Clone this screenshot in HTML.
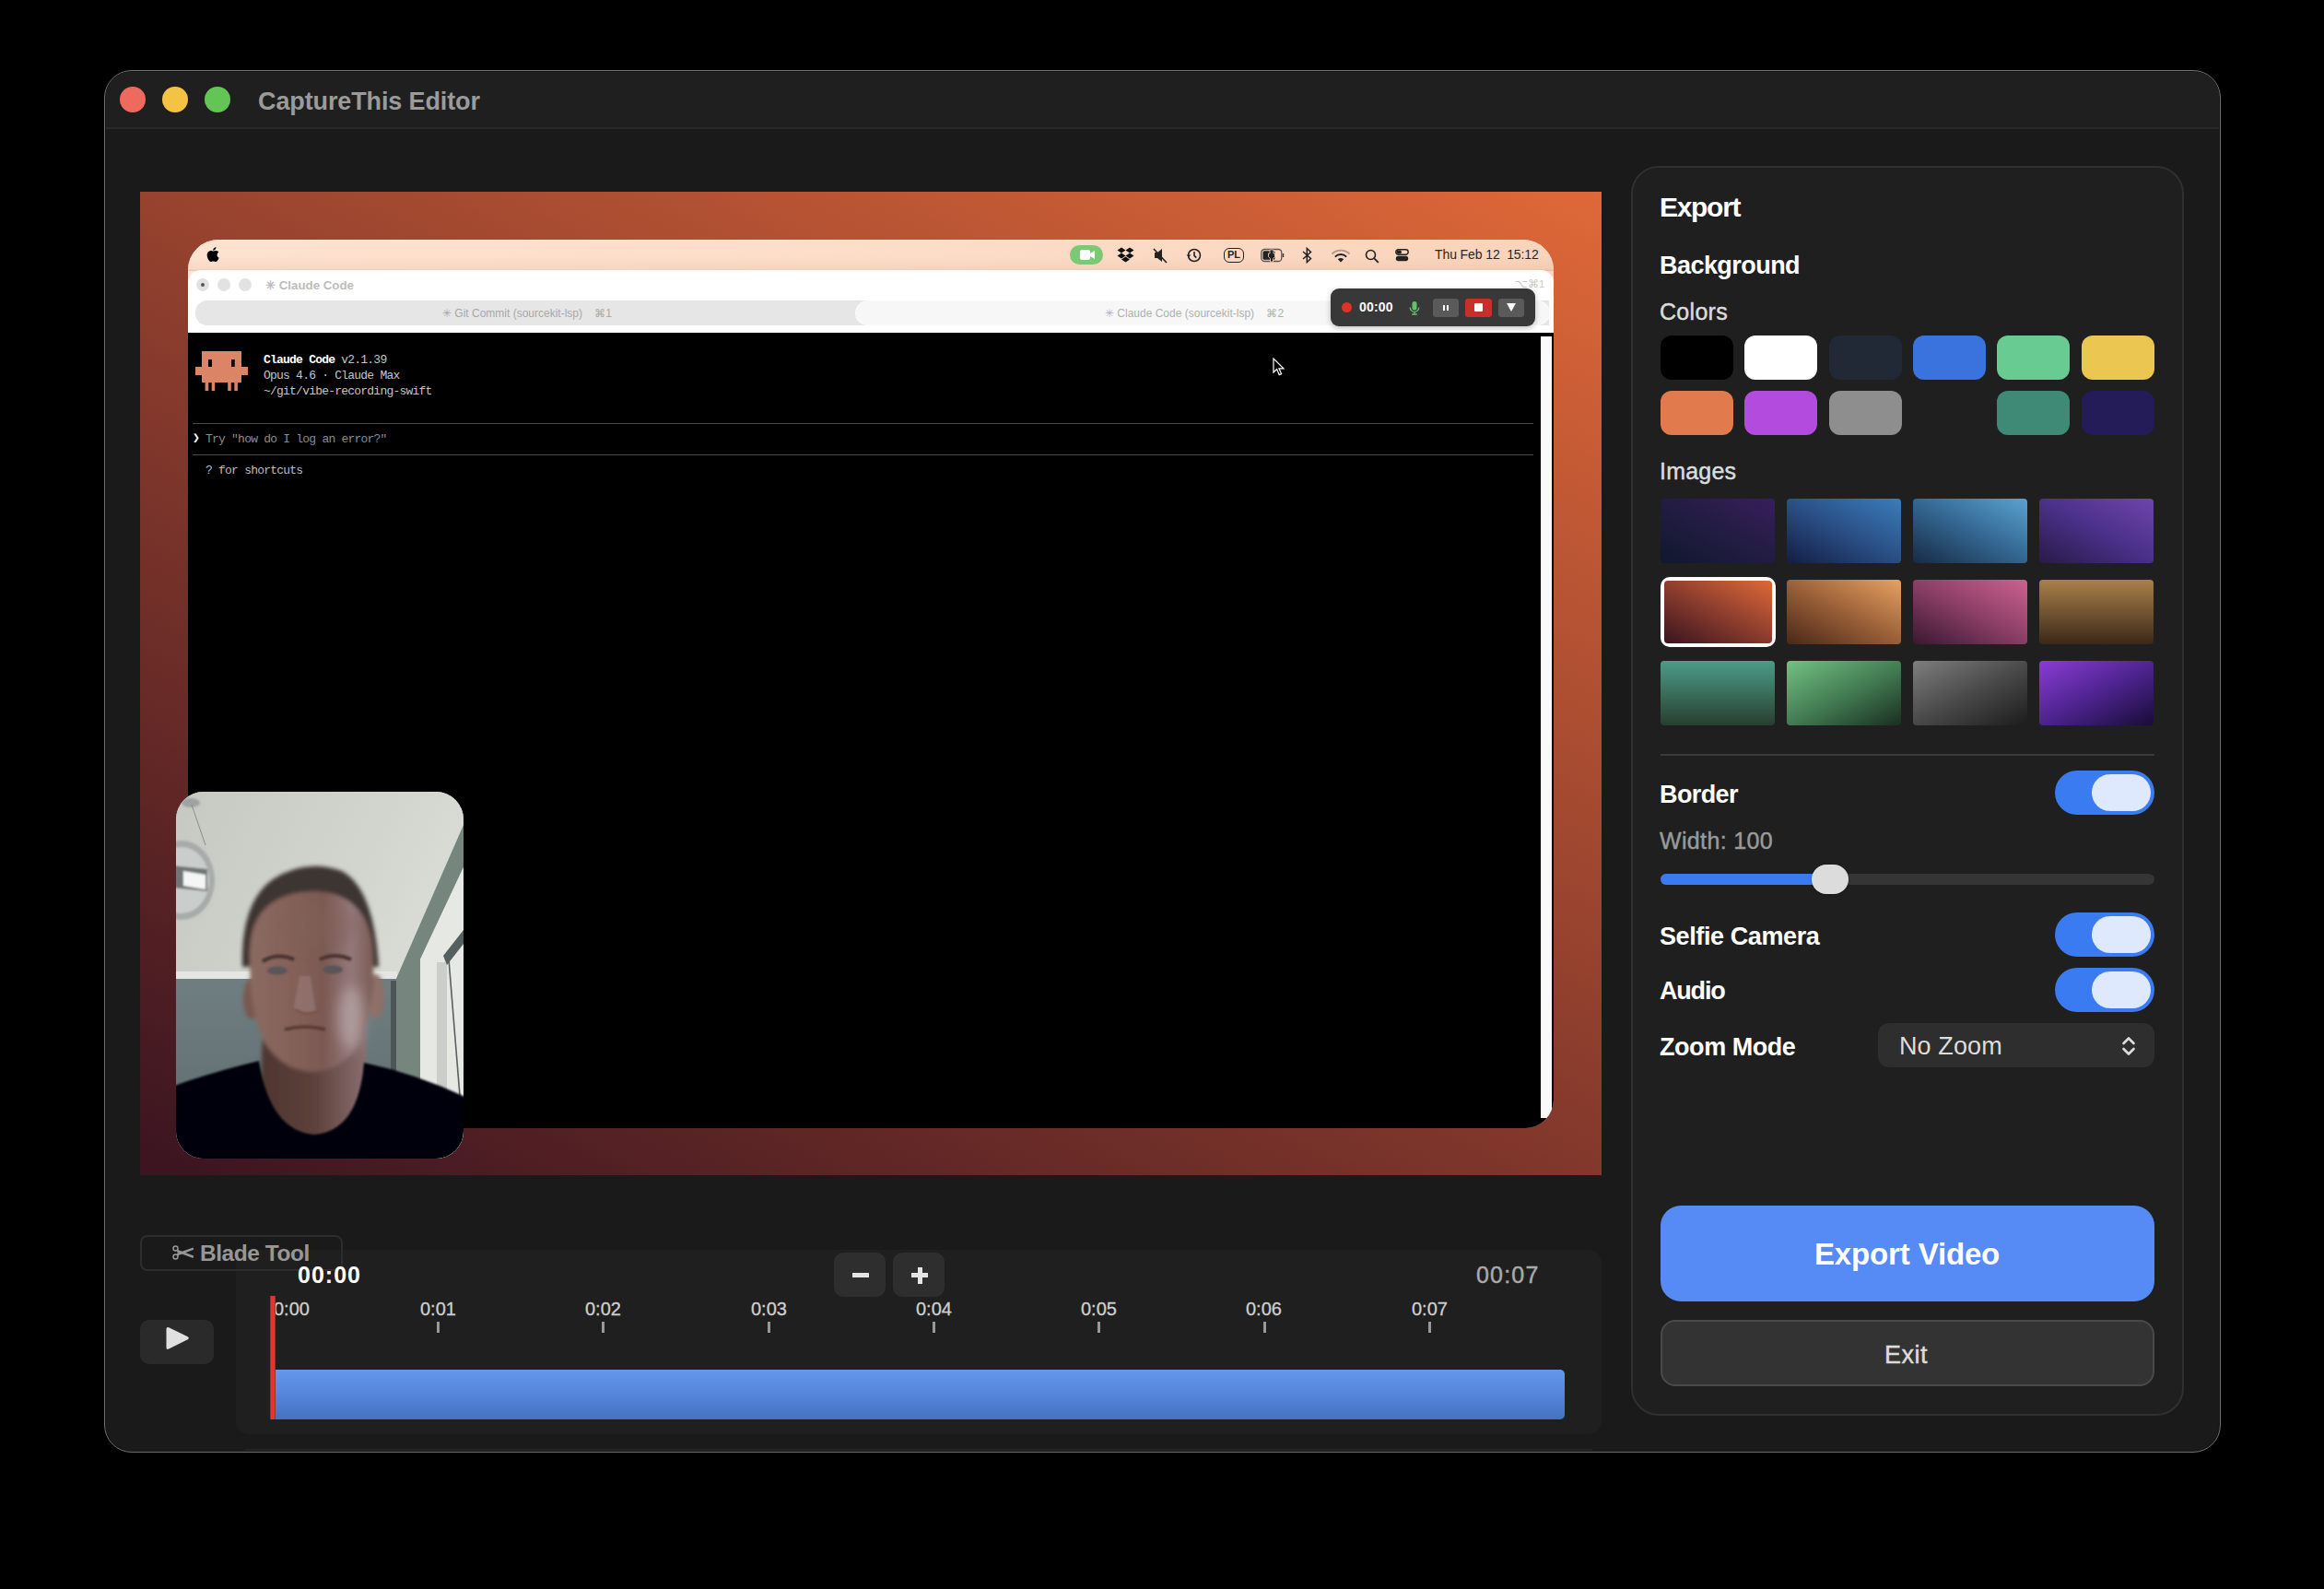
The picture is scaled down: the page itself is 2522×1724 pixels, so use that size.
<!DOCTYPE html>
<html><head><meta charset="utf-8">
<style>
*{box-sizing:border-box;margin:0;padding:0}
html,body{width:2522px;height:1724px;background:#000;overflow:hidden;font-family:"Liberation Sans",sans-serif}
.a{position:absolute}
.t{position:absolute;white-space:nowrap;line-height:1}
#win{left:113px;top:76px;width:2297px;height:1500px;border-radius:30px;background:#1a1a1a;border:1px solid #707070;box-shadow:inset 0 0 0 1px #151515;overflow:hidden}
#tb{left:1px;top:1px;width:2293px;height:62px;background:#1f1f1f;border-bottom:2px solid #2a2a2a}
.tl{width:28px;height:28px;border-radius:50%}
#prev{left:152px;top:208px;width:1586px;height:1067px;background:linear-gradient(27.5deg,#3a1420 0%,#632826 25%,#8c3d2d 50%,#b65333 75%,#df6838 100%)}
#screen{left:204px;top:260px;width:1482px;height:964px;border-radius:33px 33px 31px 31px;overflow:hidden;background:#fcdcc7}
#screen .t{position:absolute}
.mono{font-family:"Liberation Mono",monospace;font-size:13px;letter-spacing:-0.78px;color:#c4c4c4}
#panel{left:1770px;top:180px;width:600px;height:1356px;border-radius:30px;background:#1f1f1f;border:2px solid #303030}
.sw{position:absolute;width:79px;height:48px;border-radius:12px}
.im{position:absolute;width:124px;height:70px;border-radius:4px}
.tog{position:absolute;left:2230px;width:108px;height:48px;border-radius:24px;background:#3b7bf1}
.tog i{position:absolute;left:40px;top:4px;width:64px;height:40px;border-radius:20px;background:#dfe9fd}
.lbl{font-weight:bold;color:#fff;font-size:27px}
.med{-webkit-text-stroke:0.45px currentColor}
</style></head><body>
<div id="win" class="a">
  <div id="tb" class="a"></div>
</div>
<!-- traffic lights -->
<div class="a tl" style="left:130px;top:94px;background:#ee6a5f"></div>
<div class="a tl" style="left:176px;top:94px;background:#f5c343"></div>
<div class="a tl" style="left:222px;top:94px;background:#62c554"></div>
<div class="t" style="left:280px;top:97px;font-size:27px;font-weight:bold;color:#9b9b9b;letter-spacing:-0.12px">CaptureThis Editor</div>

<div id="prev" class="a"></div>
<div id="screen" class="a">
  <div class="a" style="left:0;top:0;width:1482px;height:40px;background:linear-gradient(90deg,#fde2d0,#fcdcc7 60%,#f9d3bb)"></div>
  <div class="a" style="left:0;top:18px;width:1482px;height:16px;background:linear-gradient(to bottom,rgba(200,150,120,0),rgba(200,150,120,0.12) 85%,rgba(160,110,80,0.25))"></div>
  <!-- apple -->
  <svg class="a" style="left:20px;top:8px" width="14" height="16" viewBox="0 0 14 16"><path d="M11.6 8.5c0-2 1.6-2.9 1.7-3-0.9-1.4-2.4-1.5-2.9-1.6-1.2-0.1-2.4 0.7-3 0.7-0.6 0-1.6-0.7-2.6-0.7C3.4 4 2.1 4.8 1.4 6c-1.4 2.4-0.4 6 1 8 0.7 1 1.5 2 2.5 2 1 0 1.4-0.6 2.6-0.6 1.200 0 1.500 0.6 2.600 0.6 1.100 0 1.800-1 2.400-2 0.800-1.100 1.100-2.200 1.100-2.300 0 0-2.100-0.800-2.100-3.200zM9.700 2.600C10.200 1.900 10.600 1 10.500 0 9.700 0.100 8.700 0.600 8.100 1.300 7.600 1.900 7.200 2.800 7.300 3.700 8.200 3.800 9.100 3.300 9.700 2.600z" fill="#000"/></svg>
  <!-- menu icons -->
  <div class="a" style="left:957px;top:6px;width:36px;height:21px;border-radius:11px;background:#7cc874"></div>
  <svg class="a" style="left:968px;top:11px" width="16" height="11" viewBox="0 0 16 11"><rect x="0" y="0" width="11" height="11" rx="2" fill="#fff"/><path d="M11 4l5-3v9l-5-3z" fill="#fff"/></svg>
  <svg class="a" style="left:1008px;top:8px" width="19" height="17" viewBox="0 0 19 17"><path d="M5 0.5L0.5 3.5 5 6.5 9.5 3.5zM14 0.5L9.5 3.5 14 6.5 18.5 3.5zM0.5 9.5L5 12.5 9.5 9.5 5 6.5zM18.5 9.5L14 12.5 9.5 9.5 14 6.5zM5 13.5L9.5 16.5 14 13.5 9.5 10.5z" fill="#111"/></svg>
  <svg class="a" style="left:1047px;top:8px" width="16" height="18" viewBox="0 0 16 18"><path d="M2 6h3l5-4v14l-5-4H2z" fill="#222"/><path d="M1 2l14 15" stroke="#222" stroke-width="1.6"/></svg>
  <svg class="a" style="left:1083px;top:9px" width="17" height="16" viewBox="0 0 17 16"><circle cx="9" cy="8" r="6.5" fill="none" stroke="#222" stroke-width="1.6"/><path d="M9 4v4.3l2.3 2.3" fill="none" stroke="#222" stroke-width="1.6"/><path d="M0.5 7.5l2.5 2.5 2.5-2.5z" fill="#222"/></svg>
  <div class="a" style="left:1124px;top:9px;width:22px;height:16px;border:1.6px solid #222;border-radius:6px;font-size:11px;font-weight:bold;color:#222;line-height:13px;text-align:center">PL</div>
  <svg class="a" style="left:1164px;top:9px" width="27" height="16" viewBox="0 0 27 16"><rect x="0.8" y="1.5" width="22" height="13" rx="3.5" fill="none" stroke="#333" stroke-width="1.3" opacity="0.8"/><rect x="2.5" y="3.3" width="13" height="9.4" rx="1.5" fill="#222"/><path d="M24.5 6v4" stroke="#333" stroke-width="1.4"/><path d="M10 2h4v4h1.5v3.5l-2 2V15h-3v-3.5l-2-2V6H10z" fill="#222" stroke="#fcdcc7" stroke-width="0.8"/></svg>
  <svg class="a" style="left:1209px;top:8px" width="11" height="18" viewBox="0 0 11 18"><path d="M1 5l8.5 7.5L5.3 16.5V1.5l4.2 4L1 13" fill="none" stroke="#222" stroke-width="1.5"/></svg>
  <svg class="a" style="left:1240px;top:10px" width="22" height="15" viewBox="0 0 22 15"><path d="M1.5 5.5a13.5 13.5 0 0 1 19 0" fill="none" stroke="#222" stroke-width="1.9" opacity="0.35"/><path d="M4.8 8.6a8.7 8.7 0 0 1 12.4 0" fill="none" stroke="#222" stroke-width="1.9"/><path d="M11 14.5l-3.2-3.2a4.5 4.5 0 0 1 6.4 0z" fill="#222"/></svg>
  <svg class="a" style="left:1277px;top:10px" width="16" height="16" viewBox="0 0 16 16"><circle cx="6.5" cy="6.5" r="5" fill="none" stroke="#222" stroke-width="1.6"/><path d="M10.3 10.3l4.5 4.5" stroke="#222" stroke-width="1.8"/></svg>
  <svg class="a" style="left:1310px;top:10px" width="15" height="14" viewBox="0 0 15 14"><rect x="0.8" y="0.8" width="13.4" height="5.4" rx="2.7" fill="none" stroke="#222" stroke-width="1.4"/><rect x="1.5" y="1.5" width="5.5" height="4" rx="2" fill="#222"/><rect x="0.8" y="7.8" width="13.4" height="5.4" rx="2.7" fill="#222"/></svg>
  <div class="t" style="left:1353px;top:9px;font-size:14px;color:#2a2624;letter-spacing:-0.1px">Thu Feb 12&nbsp; 15:12</div>

  <!-- white window -->
  <div class="a" style="left:0;top:33px;width:1482px;height:69px;background:#fff;border-radius:14px 14px 0 0"></div>
  <div class="a" style="left:9px;top:42px;width:14px;height:14px;border-radius:50%;background:#e2e2e2"></div>
  <div class="a" style="left:14px;top:47px;width:4px;height:4px;border-radius:50%;background:#555"></div>
  <div class="a" style="left:32px;top:42px;width:14px;height:14px;border-radius:50%;background:#e2e2e2"></div>
  <div class="a" style="left:55px;top:42px;width:14px;height:14px;border-radius:50%;background:#e2e2e2"></div>
  <div class="t" style="left:84px;top:43px;font-size:13.3px;font-weight:bold;color:#bdbdbd">✳ Claude Code</div>
  <div class="t" style="left:1440px;top:43px;font-size:11.5px;color:#c8c8c8">⌥⌘1</div>
  <div class="a" style="left:8px;top:66px;width:740px;height:27px;background:#e6e6e6;border-radius:13px 0 0 13px"></div>
  <div class="a" style="left:740px;top:66px;width:737px;height:27px;background:#e6e6e6"></div>
  <div class="a" style="left:725px;top:66.5px;width:752px;height:25px;background:#f7f7f7;border-radius:13px;box-shadow:0 0 0 1px #fafafa"></div>
  <div class="t" style="left:276px;top:74px;font-size:12px;color:#a8a8a8">✳ Git Commit (sourcekit-lsp)&nbsp;&nbsp;&nbsp; ⌘1</div>
  <div class="t" style="left:995px;top:74px;font-size:12px;color:#b0b0b0">✳ Claude Code (sourcekit-lsp)&nbsp;&nbsp;&nbsp; ⌘2</div>

  <!-- terminal -->
  <div class="a" style="left:0;top:101px;width:1482px;height:863px;background:#000"></div>
  <div class="a" style="left:1468px;top:105px;width:12px;height:848px;background:#fafafa"></div>
  <svg class="a" style="left:8px;top:121px" width="57" height="43" viewBox="0 0 57 43"><g fill="#dc8466"><rect x="7" y="0" width="43" height="34"/><rect x="0" y="17" width="57" height="9"/><rect x="10.6" y="34" width="3.7" height="9"/><rect x="17.7" y="34" width="3.5" height="9"/><rect x="35.2" y="34" width="3.6" height="9"/><rect x="42.3" y="34" width="3.6" height="9"/></g><rect x="14" y="9" width="4" height="8" fill="#000"/><rect x="39" y="9" width="3.7" height="8" fill="#000"/></svg>
  <div class="t mono" style="left:82px;top:124px"><b style="color:#fff">Claude Code</b> v2.1.39</div>
  <div class="t mono" style="left:82px;top:141px">Opus 4.6 · Claude Max</div>
  <div class="t mono" style="left:82px;top:158px">~/git/vibe-recording-swift</div>
  <div class="a" style="left:5px;top:199px;width:1455px;height:1px;background:#4a4a4a"></div>
  <div class="t mono" style="left:5px;top:209px;color:#fff">❯</div>
  <div class="t mono" style="left:19px;top:210px;color:#8c8c8c">Try "how do I log an error?"</div>
  <div class="a" style="left:5px;top:233px;width:1455px;height:1px;background:#4a4a4a"></div>
  <div class="t mono" style="left:19px;top:244px;color:#bdbdbd">? for shortcuts</div>
  <!-- cursor -->
  <svg class="a" style="left:1177px;top:128px" width="14" height="20" viewBox="0 0 14 20"><path d="M1 1v15l3.6-3.4 2.6 6 2.4-1-2.6-5.8h5z" fill="#000" stroke="#fff" stroke-width="1.2"/></svg>
</div>

<!-- recording toolbar -->
<div class="a" style="left:1444px;top:313px;width:222px;height:41px;border-radius:9px;background:#383838;box-shadow:0 2px 6px rgba(0,0,0,0.25)"></div>
<div class="a" style="left:1456px;top:328px;width:11px;height:11px;border-radius:50%;background:#e0322a"></div>
<div class="t" style="left:1475px;top:326px;font-size:14px;font-weight:bold;color:#fff;letter-spacing:0.2px">00:00</div>
<svg class="a" style="left:1529px;top:327px" width="12" height="15" viewBox="0 0 12 15"><rect x="3.5" y="0" width="5" height="9.5" rx="2.5" fill="#62c46a"/><path d="M1.2 6.5a4.8 4.8 0 0 0 9.6 0M6 11.3V14M3.2 14h5.6" fill="none" stroke="#62c46a" stroke-width="1.3"/></svg>
<div class="a" style="left:1555px;top:324px;width:28px;height:20px;border-radius:3px;background:#5a5a5a"></div>
<div class="a" style="left:1566px;top:331px;width:2px;height:6px;background:#fff"></div>
<div class="a" style="left:1570px;top:331px;width:2px;height:6px;background:#fff"></div>
<div class="a" style="left:1590px;top:324px;width:29px;height:20px;border-radius:3px;background:#c62f2a"></div>
<div class="a" style="left:1600px;top:329px;width:9px;height:9px;border-radius:1px;background:#fff"></div>
<div class="a" style="left:1626px;top:324px;width:28px;height:20px;border-radius:3px;background:#5a5a5a"></div>
<svg class="a" style="left:1635px;top:329px" width="10" height="9" viewBox="0 0 10 9"><path d="M0 0h10L5 9z" fill="#fff"/></svg>

<!-- selfie -->
<div id="selfie" class="a" style="left:191px;top:859px;width:312px;height:398px;border-radius:30px;overflow:hidden;background:#d3d6d3">
<svg width="312" height="398" viewBox="0 0 312 398">
<defs>
<filter id="bl1" x="-20%" y="-20%" width="140%" height="140%"><feGaussianBlur stdDeviation="1.2"/></filter>
<filter id="bl2" x="-20%" y="-20%" width="140%" height="140%"><feGaussianBlur stdDeviation="2.2"/></filter>
<filter id="bl6" x="-30%" y="-30%" width="160%" height="160%"><feGaussianBlur stdDeviation="7"/></filter>
<linearGradient id="ceil" x1="0" y1="0" x2="1" y2="0.6"><stop offset="0" stop-color="#c6c8c2"/><stop offset="0.6" stop-color="#d3d5cf"/><stop offset="1" stop-color="#dfe1dc"/></linearGradient>
<linearGradient id="wall" x1="0" y1="0" x2="0" y2="1"><stop offset="0" stop-color="#6f7e80"/><stop offset="1" stop-color="#5d6b6d"/></linearGradient>
<linearGradient id="skin" x1="0" y1="0" x2="1" y2="0"><stop offset="0" stop-color="#8a6a62"/><stop offset="0.3" stop-color="#85625a"/><stop offset="0.6" stop-color="#7b5952"/><stop offset="0.82" stop-color="#94787a"/><stop offset="1" stop-color="#7a5c55"/></linearGradient>
<linearGradient id="neck" x1="0" y1="0" x2="1" y2="0"><stop offset="0" stop-color="#4e3630"/><stop offset="0.5" stop-color="#5c403a"/><stop offset="1" stop-color="#8a7070"/></linearGradient>
</defs>
<rect width="312" height="398" fill="url(#ceil)"/>
<rect x="0" y="202" width="240" height="196" fill="url(#wall)"/>
<rect x="0" y="195" width="240" height="8" fill="#e4e6e3"/>
<path d="M312 36 L312 82 L265 182 L265 398 L238 398 L238 205 Z" fill="#76867f"/>
<rect x="233" y="205" width="6" height="193" fill="#4c5656"/>
<path d="M312 82 L312 398 L265 398 L265 182 Z" fill="#e6e8e4"/>
<rect x="283" y="185" width="11" height="150" fill="#b9bdb9" opacity="0.6"/>
<path d="M296 182 L308 330" stroke="#5a5f5e" stroke-width="1.6"/>
<path d="M290 178 L312 150 L312 165 L294 188 Z" fill="#555f60"/>
<g filter="url(#bl1)">
<ellipse cx="6" cy="96" rx="36" ry="43" fill="#a7abaa"/>
<ellipse cx="6" cy="96" rx="30" ry="36" fill="#c9cdcc"/>
<path d="M-4 80 L34 84 L34 108 L-4 104 Z" fill="#6f7474"/>
<path d="M8 86 L32 90 L32 106 L8 102 Z" fill="#f4f6f5"/>
<ellipse cx="16" cy="12" rx="10" ry="5" fill="#9ea2a1"/>
</g>
<path d="M17 14 L32 58" stroke="#7a8080" stroke-width="0.8"/>
<g filter="url(#bl2)">
<path d="M72 190 Q70 120 105 95 Q140 72 180 86 Q215 105 220 190 Z" fill="#3d3530"/>
<ellipse cx="82" cy="225" rx="9" ry="22" fill="#7a5850"/>
<ellipse cx="217" cy="222" rx="9" ry="24" fill="#8e7068"/>
<path d="M94 262 L206 262 L208 380 L90 380 Z" fill="url(#neck)"/>
<path d="M80 180 Q78 110 150 108 Q212 110 214 180 Q216 235 200 272 Q180 303 148 304 Q115 302 96 272 Q80 240 80 180 Z" fill="url(#skin)"/>
</g>
<g filter="url(#bl6)">
<ellipse cx="190" cy="245" rx="14" ry="34" fill="#c0b0b0" opacity="0.6"/>
<ellipse cx="150" cy="145" rx="45" ry="25" fill="#80605a" opacity="0.4"/>
</g>
<g filter="url(#bl1)">
<path d="M94 184 Q110 174 128 182" stroke="#4a3430" stroke-width="4" fill="none"/>
<path d="M156 182 Q172 174 190 182" stroke="#4a3430" stroke-width="4" fill="none"/>
<ellipse cx="110" cy="194" rx="11" ry="4.5" fill="#5a5458"/>
<ellipse cx="170" cy="193" rx="11" ry="4.5" fill="#5a5458"/>
<path d="M134 200 L128 234 Q138 242 152 240 L146 200 Z" fill="#a08484" opacity="0.45"/>
<path d="M130 236 Q140 244 154 238" stroke="#7a5248" stroke-width="2.5" fill="none"/>
<path d="M118 258 Q140 252 162 258" stroke="#5a3a36" stroke-width="3.5" fill="none"/>
</g>
<g filter="url(#bl1)">
<path d="M-5 320 Q40 304 90 292 Q102 368 150 372 Q198 368 204 294 Q262 306 320 334 L320 410 L-5 410 Z" fill="#060508"/>
</g>
</svg>
</div>

<div id="panel" class="a"></div>
<div class="t" style="left:1801px;top:210px;font-size:30px;font-weight:bold;color:#fff;letter-spacing:-1.3px">Export</div>
<div class="t" style="left:1801px;top:275px;font-size:27px;font-weight:bold;color:#fff;letter-spacing:-0.55px">Background</div>
<div class="t med" style="left:1801px;top:326px;font-size:25px;color:#dcdcdc;letter-spacing:0.3px">Colors</div>
<div class="sw" style="left:1802px;top:364px;background:#000"></div>
<div class="sw" style="left:1893px;top:364px;background:#fff"></div>
<div class="sw" style="left:1985px;top:364px;background:#212836"></div>
<div class="sw" style="left:2076px;top:364px;background:#3a73de"></div>
<div class="sw" style="left:2167px;top:364px;background:#68cb92"></div>
<div class="sw" style="left:2259px;top:364px;background:#ebc651"></div>
<div class="sw" style="left:1802px;top:424px;background:#e17b4e"></div>
<div class="sw" style="left:1893px;top:424px;background:#b34bde"></div>
<div class="sw" style="left:1985px;top:424px;background:#8e8e8e"></div>
<div class="sw" style="left:2167px;top:424px;background:#3f8a77"></div>
<div class="sw" style="left:2259px;top:424px;background:#241b59"></div>
<div class="t med" style="left:1801px;top:499px;font-size:25px;color:#dcdcdc;letter-spacing:0.2px">Images</div>
<div class="im" style="left:1802px;top:541px;background:linear-gradient(27.5deg,#10182e,#221c42 50%,#381e5a)"></div>
<div class="im" style="left:1939px;top:541px;background:linear-gradient(27.5deg,#141d45,#2a4f85 50%,#3b7dbb)"></div>
<div class="im" style="left:2076px;top:541px;background:linear-gradient(27.5deg,#182a45,#336690 50%,#5aa2d2)"></div>
<div class="im" style="left:2213px;top:541px;background:linear-gradient(27.5deg,#281a48,#4a3088 50%,#6f45ac)"></div>
<div class="a" style="left:1802px;top:626px;width:125px;height:76px;border-radius:10px;border:4px solid #fff"></div>
<div class="im" style="left:1806px;top:630px;width:117px;height:68px;border-radius:4px;background:linear-gradient(27.5deg,#3a1420 0%,#632826 25%,#8c3d2d 50%,#b65333 75%,#df6838 100%)"></div>
<div class="im" style="left:1939px;top:629px;background:linear-gradient(27.5deg,#4a2718,#9a6038 50%,#e8a262)"></div>
<div class="im" style="left:2076px;top:629px;background:linear-gradient(27.5deg,#3a1830,#8a3e66 50%,#cc6290)"></div>
<div class="im" style="left:2213px;top:629px;background:linear-gradient(to bottom,#a88048,#6e5030 55%,#3a2818)"></div>
<div class="im" style="left:1802px;top:717px;background:linear-gradient(to bottom,#4c9b88,#3a6e5c 50%,#283e2e)"></div>
<div class="im" style="left:1939px;top:717px;background:linear-gradient(152.5deg,#72c283,#40774f 55%,#1a2e20)"></div>
<div class="im" style="left:2076px;top:717px;background:linear-gradient(152.5deg,#7e7e7e,#4a4a4a 50%,#1c1c1c)"></div>
<div class="im" style="left:2213px;top:717px;background:linear-gradient(152.5deg,#8a3cd4,#4e2490 50%,#180c38)"></div>
<div class="a" style="left:1802px;top:818px;width:536px;height:2px;background:#3a3a3a"></div>
<div class="t lbl" style="left:1801px;top:849px;letter-spacing:-0.6px">Border</div>
<div class="tog" style="top:836px"><i></i></div>
<div class="t med" style="left:1801px;top:900px;font-size:25px;color:#9a9a9a;letter-spacing:0.35px">Width: 100</div>
<div class="a" style="left:1802px;top:948px;width:536px;height:12px;border-radius:6px;background:#353535"></div>
<div class="a" style="left:1802px;top:948px;width:180px;height:12px;border-radius:6px 0 0 6px;background:#3b7bf1"></div>
<div class="a" style="left:1966px;top:938px;width:40px;height:32px;border-radius:16px;background:#dcdcdc;box-shadow:0 1px 3px rgba(0,0,0,0.3)"></div>
<div class="t lbl" style="left:1801px;top:1003px;letter-spacing:-0.4px">Selfie Camera</div>
<div class="tog" style="top:990px"><i></i></div>
<div class="t lbl" style="left:1801px;top:1062px;letter-spacing:-1.2px">Audio</div>
<div class="tog" style="top:1050px"><i></i></div>
<div class="t lbl" style="left:1801px;top:1123px;letter-spacing:-0.45px">Zoom Mode</div>
<div class="a" style="left:2038px;top:1110px;width:300px;height:48px;border-radius:12px;background:#2e2e2e"></div>
<div class="t" style="left:2061px;top:1122px;font-size:27px;color:#dddddd;letter-spacing:0.1px">No Zoom</div>
<svg class="a" style="left:2302px;top:1123px" width="16" height="24" viewBox="0 0 16 24"><path d="M2.5 9L8 3.5 13.5 9M2.5 15L8 20.5 13.5 15" fill="none" stroke="#ddd" stroke-width="2.6" stroke-linecap="round" stroke-linejoin="round"/></svg>
<div class="a" style="left:1802px;top:1308px;width:536px;height:104px;border-radius:22px;background:#568bf5"></div>
<div class="t" style="left:1969px;top:1344px;font-size:33px;font-weight:bold;color:#fff;letter-spacing:-0.15px">Export Video</div>
<div class="a" style="left:1802px;top:1432px;width:536px;height:72px;border-radius:16px;background:#333;border:2px solid #4a4a4a"></div>
<div class="t med" style="left:2045px;top:1457px;font-size:27px;color:#dcdcdc;letter-spacing:0.5px">Exit</div>

<!-- timeline -->
<div class="a" style="left:265px;top:1572px;width:1463px;height:2px;background:#242424"></div>
<div class="a" style="left:256px;top:1356px;width:1482px;height:200px;border-radius:14px;background:#1f1f1f"></div>
<div class="a" style="left:152px;top:1340px;width:220px;height:39px;border-radius:8px;border:2px solid #2d2d2d"></div>
<div class="t" style="left:217px;top:1348px;font-size:24.5px;font-weight:bold;color:#979797;letter-spacing:-0.45px">Blade Tool</div>
<svg class="a" style="left:185px;top:1350px" width="28" height="20" viewBox="0 0 28 20"><g fill="none" stroke="#979797" stroke-width="1.5"><circle cx="5.5" cy="4.6" r="2.5"/><circle cx="5.5" cy="13.6" r="2.5"/></g><path d="M7.4 5.8L25.2 12.6 24.6 15 7 8.4z" fill="#979797"/><path d="M7.4 12.4L25.2 5.8 24.6 3.4 7 9.8z" fill="#979797"/></svg>
<div class="t" style="left:323px;top:1371px;font-size:25px;font-weight:bold;color:#fff;letter-spacing:1px">00:00</div>
<div class="a" style="left:905px;top:1359px;width:56px;height:48px;border-radius:10px;background:#2e2e2e"></div>
<div class="a" style="left:925px;top:1381px;width:18px;height:5px;background:#e4e4e4"></div>
<div class="a" style="left:969px;top:1359px;width:56px;height:48px;border-radius:10px;background:#2e2e2e"></div>
<div class="a" style="left:989px;top:1381px;width:18px;height:5px;background:#e4e4e4"></div>
<div class="a" style="left:995.5px;top:1375px;width:5px;height:18px;background:#e4e4e4"></div>
<div class="t med" style="left:1602px;top:1371px;font-size:25px;color:#aaa;letter-spacing:1.2px">00:07</div>
<div class="a" style="left:152px;top:1432px;width:80px;height:48px;border-radius:10px;background:#2a2a2a"></div>
<svg class="a" style="left:179px;top:1439px" width="27" height="26" viewBox="0 0 27 26"><path d="M1.5 3Q1.5 0.2 4.2 1.3L24.8 11.2Q26.8 12.7 24.8 14.3L4.2 24.5Q1.5 25.800 1.5 23z" fill="#e0e0e0"/></svg>
<div class="t" style="left:297px;top:1410px;font-size:20px;color:#cfcfcf;-webkit-text-stroke:0.3px #cfcfcf">0:00</div>
<div class="t" style="left:456px;top:1410px;font-size:20px;color:#cfcfcf;-webkit-text-stroke:0.3px #cfcfcf">0:01</div>
<div class="t" style="left:635px;top:1410px;font-size:20px;color:#cfcfcf;-webkit-text-stroke:0.3px #cfcfcf">0:02</div>
<div class="t" style="left:815px;top:1410px;font-size:20px;color:#cfcfcf;-webkit-text-stroke:0.3px #cfcfcf">0:03</div>
<div class="t" style="left:994px;top:1410px;font-size:20px;color:#cfcfcf;-webkit-text-stroke:0.3px #cfcfcf">0:04</div>
<div class="t" style="left:1173px;top:1410px;font-size:20px;color:#cfcfcf;-webkit-text-stroke:0.3px #cfcfcf">0:05</div>
<div class="t" style="left:1352px;top:1410px;font-size:20px;color:#cfcfcf;-webkit-text-stroke:0.3px #cfcfcf">0:06</div>
<div class="t" style="left:1532px;top:1410px;font-size:20px;color:#cfcfcf;-webkit-text-stroke:0.3px #cfcfcf">0:07</div>
<div class="a" style="left:474px;top:1434px;width:3px;height:12px;background:#999"></div>
<div class="a" style="left:653px;top:1434px;width:3px;height:12px;background:#999"></div>
<div class="a" style="left:833px;top:1434px;width:3px;height:12px;background:#999"></div>
<div class="a" style="left:1012px;top:1434px;width:3px;height:12px;background:#999"></div>
<div class="a" style="left:1191px;top:1434px;width:3px;height:12px;background:#999"></div>
<div class="a" style="left:1371px;top:1434px;width:3px;height:12px;background:#999"></div>
<div class="a" style="left:1550px;top:1434px;width:3px;height:12px;background:#999"></div>
<div class="a" style="left:297px;top:1486px;width:1401px;height:54px;border-radius:0 5px 5px 0;background:linear-gradient(to bottom,#6399eb,#5585dc 50%,#4671c0)"></div>
<div class="a" style="left:293px;top:1406px;width:6px;height:134px;background:#e8352c;border-left:1px solid #8a3a35;border-right:1px solid #8a3a35"></div>
</body></html>
